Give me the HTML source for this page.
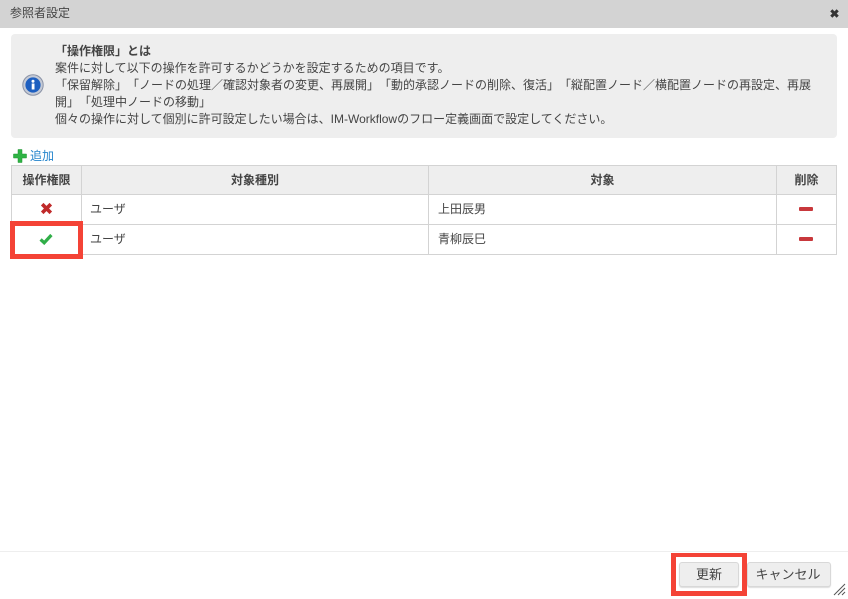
<!DOCTYPE html>
<html lang="ja">
<head>
<meta charset="utf-8">
<title>参照者設定</title>
<style>
html,body{margin:0;padding:0;background:#fff}
body{width:848px;height:599px;position:relative;overflow:hidden;font-family:"Liberation Sans","Noto Sans CJK JP",sans-serif;font-size:12px;color:#444;text-spacing-trim:space-all}
.abs{position:absolute}
.title{left:0;top:0;width:848px;height:28px;background:#d3d3d3}
.title span{position:absolute;left:10px;top:5px;line-height:17px;color:#444}
.info{left:11px;top:34px;width:826px;height:104px;background:#eee;border-radius:4px}
.txt{left:55px;top:43px;width:770px;line-height:17px;color:#444}
.txt div{height:17px;white-space:nowrap}
b{font-weight:bold}
.add{left:30px;top:148px;color:#2585cc;line-height:17px}
table{position:absolute;left:11px;top:165px;width:825px;border-collapse:collapse;table-layout:fixed}
th,td{border:1px solid #d3d3d3;padding:0;line-height:17px}
th{background:#eee;font-weight:bold;color:#444;text-align:center;height:28px}
td{padding-left:8px;color:#444;height:29px}
td.t{padding-left:9px}
td.c{padding:0;text-align:center}
.fl{left:0;top:551px;width:848px;height:1px;background:#eee}
.btn{top:562px;height:23px;border:1px solid #d8d8d8;border-radius:3px;background:#eee;text-align:center;line-height:23px;color:#444;font-size:13px;box-shadow:0 1px 1px #ddd}
.red{border-style:solid;border-color:#f44336;box-sizing:border-box}
svg{display:block}
</style>
</head>
<body>
<div class="abs title"><span>参照者設定</span></div>
<svg class="abs" style="left:829px;top:8px" width="11" height="11" viewBox="0 0 11 11"><path d="M2.3 2.3L8.7 8.7M8.7 2.3L2.3 8.7" stroke="#333" stroke-width="3"/></svg>

<div class="abs info"></div>
<svg class="abs" style="left:22px;top:74px" width="22" height="22" viewBox="0 0 22 22">
<circle cx="11" cy="11" r="10.2" fill="#c4cad6" stroke="#8b93a6" stroke-width="1"/>
<circle cx="11" cy="11" r="7.6" fill="#1d5fc0"/>
<rect x="9.7" y="9.5" width="2.8" height="6" fill="#fff"/>
<circle cx="11" cy="7.2" r="1.5" fill="#fff"/>
</svg>
<div class="abs txt">
<div><b>「操作権限」とは</b></div>
<div>案件に対して以下の操作を許可するかどうかを設定するための項目です。</div>
<div>「保留解除」「ノードの処理／確認対象者の変更、再展開」「動的承認ノードの削除、復活」「縦配置ノード／横配置ノードの再設定、再展</div>
<div>開」「処理中ノードの移動」</div>
<div>個々の操作に対して個別に許可設定したい場合は、IM-Workflowのフロー定義画面で設定してください。</div>
</div>

<svg class="abs" style="left:13px;top:149px" width="14" height="14" viewBox="0 0 14 14"><path d="M5 0.5H9V5H13.5V9H9V13.5H5V9H0.5V5H5Z" fill="#2fb344" stroke="#1f9430" stroke-width="0.5"/></svg>
<div class="abs add">追加</div>

<table>
<colgroup><col style="width:70px"><col style="width:347px"><col style="width:348px"><col style="width:60px"></colgroup>
<tr><th>操作権限</th><th>対象種別</th><th>対象</th><th>削除</th></tr>
<tr><td class="c"></td><td>ユーザ</td><td class="t">上田辰男</td><td class="c"></td></tr>
<tr><td class="c"></td><td>ユーザ</td><td class="t">青柳辰巳</td><td class="c"></td></tr>
</table>

<svg class="abs" style="left:40px;top:202px" width="13" height="13" viewBox="0 0 13 13"><path d="M2.2 2.2L10.8 10.8M10.8 2.2L2.2 10.8" stroke="#c02a2a" stroke-width="3.6"/></svg>
<svg class="abs" style="left:39px;top:233px" width="14" height="12" viewBox="0 0 14 12"><path d="M1.6 6.4L5.2 9.8L12.4 2" fill="none" stroke="#30ae48" stroke-width="3.2"/></svg>
<div class="abs" style="left:799px;top:207px;width:14px;height:4px;background:#c8383c;border-radius:1px"></div>
<div class="abs" style="left:799px;top:237px;width:14px;height:4px;background:#c8383c;border-radius:1px"></div>

<div class="abs red" style="left:10px;top:221px;width:73px;height:38px;border-width:5px"></div>

<div class="abs fl"></div>
<div class="abs btn" style="left:679px;width:58px">更新</div>
<div class="abs btn" style="left:747px;width:82px;text-indent:-2px">キャンセル</div>
<div class="abs red" style="left:671px;top:553px;width:76px;height:43px;border-width:4px 5px 5px"></div>

<svg class="abs" style="left:833px;top:583px" width="13" height="13" viewBox="0 0 13 13"><path d="M1 12L12 1M5 12L12 5M9 12L12 9" stroke="#555" stroke-width="1"/></svg>
</body>
</html>
